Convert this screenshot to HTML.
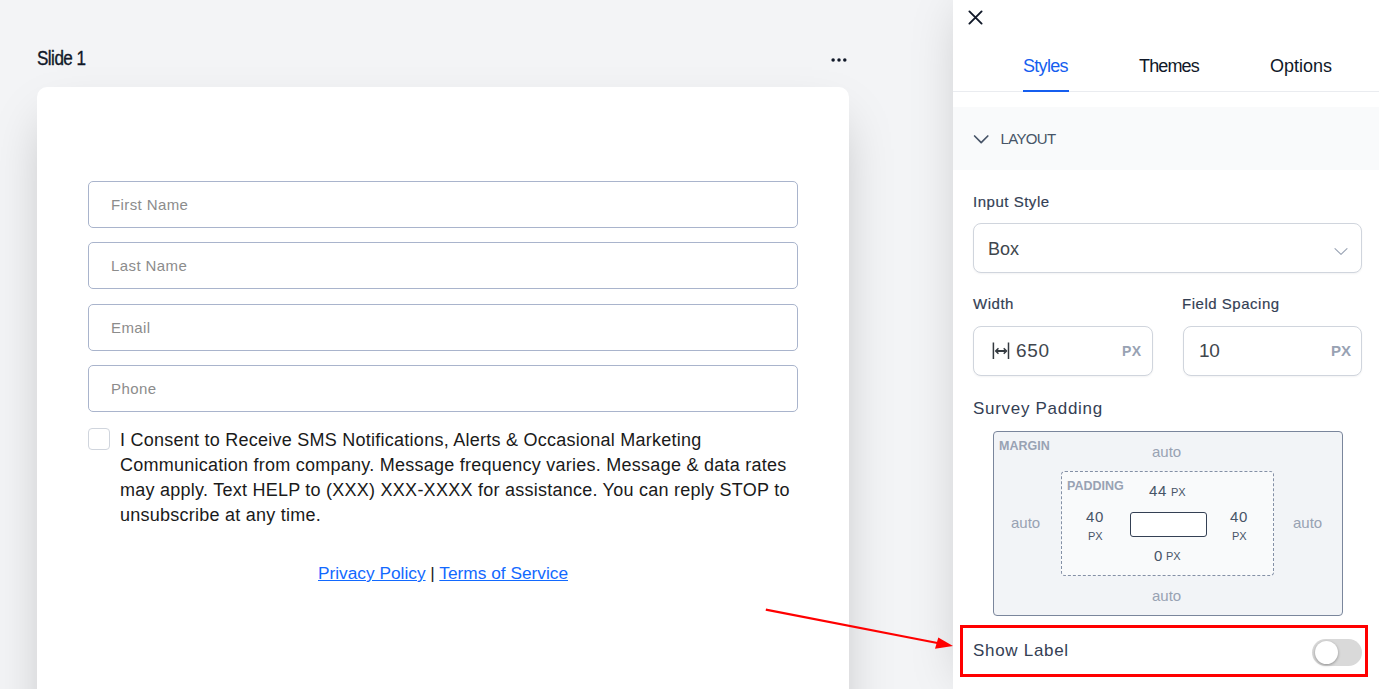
<!DOCTYPE html>
<html lang="en">
<head>
<meta charset="utf-8">
<title>Survey Builder</title>
<style>
*{box-sizing:border-box;margin:0;padding:0}
html,body{width:1379px;height:689px;overflow:hidden}
body{background:#f3f4f6;font-family:"Liberation Sans",sans-serif;position:relative;color:#101828}
.abs{position:absolute;white-space:nowrap;line-height:1}
/* left canvas */
#slide-title{left:36.5px;top:47px;font-size:19.5px;line-height:22px;color:#101828;letter-spacing:-.6px;transform:scaleX(.875);transform-origin:0 0;-webkit-text-stroke:.35px #101828}
#card{position:absolute;left:37px;top:87px;width:812px;height:700px;background:#fff;border-radius:10px;box-shadow:0 25px 50px -12px rgba(0,0,0,.25)}
.inp{position:absolute;left:51px;width:710px;height:47px;border:1px solid #a9b4cc;border-radius:5px;background:#fff;font-size:15px;line-height:45px;padding-left:22px;color:#8c8c8c;letter-spacing:.4px}
#cb{position:absolute;left:51px;top:341px;width:22px;height:22px;border:1px solid #d0d5dd;border-radius:4px;background:#fff}
#consent{position:absolute;left:83px;top:341px;width:720px;font-size:18px;line-height:25px;color:#1a1a1a;letter-spacing:.25px}
#links{position:absolute;left:0;width:812px;top:474px;text-align:center;font-size:17.3px;line-height:24px;color:#222}
#links a{color:#1269ff;text-decoration:underline}
/* right panel */
#panel{position:absolute;left:953px;top:0;width:426px;height:689px;background:#fff;box-shadow:0 0 50px -12px rgba(0,0,0,.21)}
.tab{font-size:18px;line-height:22px;top:55px;color:#101828}
#tabline{position:absolute;left:0;top:91px;width:426px;height:1px;background:#eaecf0}
#tabul{position:absolute;left:70px;top:90px;width:46px;height:2px;background:#155eef}
#sec{position:absolute;left:0;top:107px;width:426px;height:63px;background:#f9fafb}
.lbl{font-size:15px;color:#344054;letter-spacing:.52px;-webkit-text-stroke:.18px #344054}
.box{position:absolute;background:#fff;border:1px solid #d0d5dd;border-radius:8px;box-shadow:0 1px 2px rgba(16,24,40,.05)}
.val{font-size:18px;color:#40464d}
.px{font-size:14px;font-weight:bold;color:#98a2b3}
#mbox{position:absolute;left:40px;top:431px;width:350px;height:185px;background:#f2f4f7;border:1px solid #7a869c;border-radius:4px}
#pbox{position:absolute;left:108px;top:471px;width:213px;height:105px;background:#f9fafb;border:1px dashed #8490a6;border-radius:4px}
#ibox{position:absolute;left:177px;top:512px;width:77px;height:25px;background:#fff;border:1.5px solid #344054;border-radius:3px}
.tag{font-size:12.5px;font-weight:bold;color:#98a2b3}
.auto{font-size:15px;color:#98a2b3}
.num{font-size:15px;color:#475467;letter-spacing:.6px}
.spx{font-size:11px;color:#475467}
#redbox{position:absolute;left:7px;top:625px;width:408px;height:52px;border:3px solid #ff0000}
#toggle{position:absolute;left:359px;top:639px;width:50px;height:27px;border-radius:14px;background:#d9d9d9}
#knob{position:absolute;left:2.5px;top:2px;width:23px;height:23px;border-radius:50%;background:#fff;box-shadow:0 1px 3px rgba(0,0,0,.35)}
</style>
</head>
<body>
<div id="slide-title" class="abs">Slide 1</div>
<svg class="abs" style="left:828px;top:55px" width="22" height="10" viewBox="0 0 22 10"><circle cx="5.1" cy="5" r="1.75" fill="#101828"/><circle cx="11" cy="5" r="1.75" fill="#101828"/><circle cx="16.8" cy="5" r="1.75" fill="#101828"/></svg>

<div id="card">
  <div class="inp" style="top:94px">First Name</div>
  <div class="inp" style="top:155px">Last Name</div>
  <div class="inp" style="top:217px">Email</div>
  <div class="inp" style="top:278px">Phone</div>
  <div id="cb"></div>
  <div id="consent">I Consent to Receive SMS Notifications, Alerts &amp; Occasional Marketing<br>Communication from company. Message frequency varies. Message &amp; data rates<br>may apply. Text HELP to (XXX) XXX-XXXX for assistance. You can reply STOP to<br>unsubscribe at any time.</div>
  <div id="links"><a>Privacy Policy</a> | <a>Terms of Service</a></div>
</div>

<div id="panel">
  <svg class="abs" style="left:13px;top:8px" width="20" height="20" viewBox="0 0 20 20"><path d="M3.4 3.4 L15.6 15.6 M15.6 3.4 L3.4 15.6" stroke="#101828" stroke-width="1.9" stroke-linecap="round" fill="none"/></svg>
  <div class="abs tab" style="left:70px;color:#155eef;letter-spacing:-.7px">Styles</div>
  <div class="abs tab" style="left:186px;letter-spacing:-.85px">Themes</div>
  <div class="abs tab" style="left:317px;letter-spacing:0">Options</div>
  <div id="tabline"></div><div id="tabul"></div>
  <div id="sec"></div>
  <svg class="abs" style="left:19px;top:132px" width="18" height="14" viewBox="0 0 18 14"><path d="M2.6 4 L9.2 10.6 L15.8 4" stroke="#475467" stroke-width="1.7" stroke-linecap="round" stroke-linejoin="round" fill="none"/></svg>
  <div class="abs" style="left:47.5px;top:130.3px;font-size:15px;line-height:18px;color:#475467;letter-spacing:-.65px">LAYOUT</div>

  <div class="abs lbl" style="left:20px;top:193px;line-height:18px">Input Style</div>
  <div class="box" style="left:20px;top:223px;width:389px;height:50px"></div>
  <div class="abs val" style="left:35px;top:238px;line-height:22px">Box</div>
  <svg class="abs" style="left:380px;top:245px" width="16" height="12" viewBox="0 0 16 12"><path d="M2 3.6 L8 9.4 L14 3.6" stroke="#98a2b3" stroke-width="1.1" stroke-linecap="round" stroke-linejoin="round" fill="none"/></svg>

  <div class="abs lbl" style="left:20px;top:295px;line-height:18px">Width</div>
  <div class="abs lbl" style="left:229px;top:295px;line-height:18px">Field Spacing</div>
  <div class="box" style="left:20px;top:326px;width:180px;height:50px"></div>
  <div class="box" style="left:230px;top:326px;width:179px;height:50px"></div>
  <svg class="abs" style="left:38px;top:342px" width="20" height="18" viewBox="0 0 20 18"><path d="M2.4 0.6 V16.9 M17.5 0.6 V16.9" stroke="#343a40" stroke-width="1.5" fill="none"/><path d="M5.6 9 H14.6" stroke="#343a40" stroke-width="2" fill="none"/><path d="M7 6.7 L4.7 9 L7 11.3 M13.2 6.7 L15.5 9 L13.2 11.3" stroke="#343a40" stroke-width="1.6" fill="none" stroke-linecap="round" stroke-linejoin="round"/></svg>
  <div class="abs val" style="left:63px;top:339.5px;line-height:22px;font-size:19px;letter-spacing:.7px">650</div>
  <div class="abs px" style="left:169px;top:343px;line-height:16px;letter-spacing:.5px">PX</div>
  <div class="abs val" style="left:246px;top:339.5px;line-height:22px;font-size:19px;letter-spacing:-.3px">10</div>
  <div class="abs px" style="left:378px;top:343px;line-height:16px;font-size:15px">PX</div>

  <div class="abs" style="left:20px;top:398px;font-size:17px;line-height:22px;color:#344054;letter-spacing:.7px">Survey Padding</div>
  <div id="mbox"></div>
  <div id="pbox"></div>
  <div id="ibox"></div>
  <div class="abs tag" style="left:46px;top:439px;line-height:14px">MARGIN</div>
  <div class="abs tag" style="left:114px;top:478.6px;line-height:14px">PADDING</div>
  <div class="abs auto" style="left:199px;top:443px;line-height:18px">auto</div>
  <div class="abs auto" style="left:58px;top:514px;line-height:18px">auto</div>
  <div class="abs auto" style="left:340px;top:514px;line-height:18px">auto</div>
  <div class="abs auto" style="left:199px;top:587px;line-height:18px">auto</div>
  <div class="abs num" style="left:196px;top:482px;line-height:18px">44</div>
  <div class="abs spx" style="left:218px;top:485px;line-height:14px">PX</div>
  <div class="abs num" style="left:133px;top:508px;line-height:18px">40</div>
  <div class="abs spx" style="left:135px;top:529px;line-height:14px">PX</div>
  <div class="abs num" style="left:277px;top:508px;line-height:18px">40</div>
  <div class="abs spx" style="left:279px;top:529px;line-height:14px">PX</div>
  <div class="abs num" style="left:201px;top:547px;line-height:18px">0</div>
  <div class="abs spx" style="left:213px;top:549px;line-height:14px">PX</div>

  <div class="abs" style="left:20px;top:640px;font-size:17px;line-height:22px;color:#344054;letter-spacing:.7px">Show Label</div>
  <div id="toggle"><div id="knob"></div></div>
  <div id="redbox"></div>
</div>

<svg class="abs" style="left:750px;top:590.7px" width="220" height="80" viewBox="0 0 220 80"><path d="M15.8 18.6 L190 52.5" stroke="#ff0000" stroke-width="2.2" fill="none"/><path d="M203 55 L185 57.8 L188.3 46.6 Z" fill="#ff0000"/></svg>
</body>
</html>
